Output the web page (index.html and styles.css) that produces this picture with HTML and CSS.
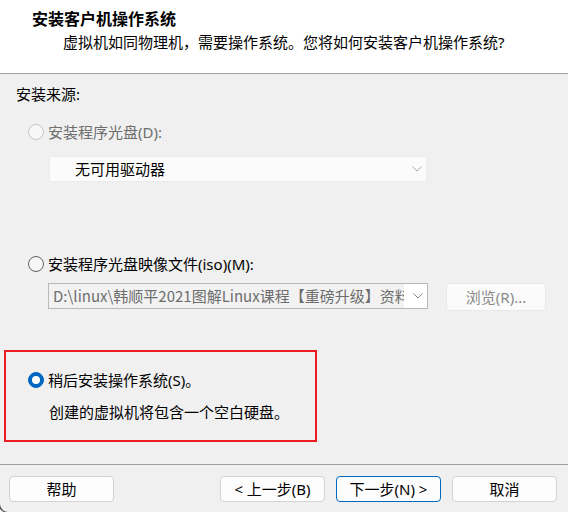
FILE: index.html
```html
<!DOCTYPE html>
<html lang="zh-CN">
<head>
<meta charset="utf-8">
<title>新建虚拟机向导</title>
<link rel="stylesheet" href="styles.css">
</head>
<body>
<div class="window">
  <header class="header">
    <div class="title">安装客户机操作系统</div>
    <div class="subtitle">虚拟机如同物理机，需要操作系统。您将如何安装客户机操作系统?</div>
  </header>
  <main class="content">
    <div class="section-label">安装来源:</div>
    <div class="radio-row disabled"><span class="radio"></span><span class="radio-label">安装程序光盘(D):</span></div>
    <div class="select">
      <span class="select-text">无可用驱动器</span>
      <svg class="chev light" width="10" height="6" viewBox="0 0 10 6"><polyline points="0.5,0.5 5,5 9.5,0.5" fill="none" stroke="currentColor" stroke-width="1"/></svg>
    </div>
    <div class="radio-row iso"><span class="radio"></span><span class="radio-label">安装程序光盘映像文件(iso)(M):</span></div>
    <div class="iso-row">
      <div class="combo">
        <span class="combo-text">D:\linux\韩顺平2021图解Linux课程【重磅升级】资料分享\CentOS-7-x86_64-DVD-1708.iso</span>
        <span class="combo-btn"><svg class="chev" width="10" height="6" viewBox="0 0 10 6"><polyline points="0.5,0.5 5,5 9.5,0.5" fill="none" stroke="currentColor" stroke-width="1"/></svg></span>
      </div>
      <button class="btn browse">浏览(R)...</button>
    </div>
    <div class="highlight">
      <div class="radio-row"><span class="radio checked"></span><span class="radio-label">稍后安装操作系统(S)。</span></div>
      <div class="note">创建的虚拟机将包含一个空白硬盘。</div>
    </div>
  </main>
  <footer class="footer">
    <button class="btn">帮助</button>
    <div class="nav">
      <button class="btn">&lt; 上一步(B)</button>
      <button class="btn default">下一步(N) &gt;</button>
      <button class="btn">取消</button>
    </div>
  </footer>
  <div class="corner"></div>
</div>
</body>
</html>
```
FILE: styles.css
```css
* { box-sizing: border-box; }
html, body { margin: 0; padding: 0; }
body {
  background: #f0f0f0;
  font-family: "Noto Sans", "Noto Sans CJK SC", sans-serif;
  font-size: 15px;
  color: #000;
}
.window {
  position: relative;
  width: 568px;
  height: 512px;
  overflow: hidden;
  background: #f0f0f0;
}
.header {
  height: 74px;
  background: #fff;
  border-bottom: 1px solid #a0a0a0;
  padding-top: 9px;
}
.title {
  padding-left: 32px;
  font-size: 16px;
  font-weight: bold;
  line-height: 20px;
}
.subtitle {
  margin-top: 3px;
  padding-left: 63px;
  line-height: 20px;
}
.content {
  padding-top: 10px;
}
.section-label {
  padding-left: 16px;
  line-height: 20px;
}
.radio-row {
  display: flex;
  align-items: center;
  height: 20px;
  line-height: 20px;
  padding-left: 28px;
  margin-top: 18px;
}
.radio-row.iso { margin-top: 72px; }
.radio {
  width: 16px;
  height: 16px;
  border-radius: 50%;
  border: 1px solid #616161;
  background: #f6f6f6;
  margin-right: 4px;
  flex: none;
  position: relative;
}
.disabled .radio {
  border-color: #c6c6c6;
  background: #f7f7f7;
}
.disabled .radio-label { color: #6d6d6d; }
.radio.checked {
  background: #0067c0;
  border-color: #0067c0;
}
.radio.checked::after {
  content: "";
  position: absolute;
  left: 3px;
  top: 3px;
  width: 8px;
  height: 8px;
  border-radius: 50%;
  background: #fff;
}
.select {
  margin-top: 14px;
  margin-left: 49px;
  width: 378px;
  height: 26px;
  background: #fbfbfb;
  border: 1px solid #ececec;
  border-radius: 2px;
  display: flex;
  align-items: center;
  justify-content: space-between;
  padding: 0 4px 0 25px;
}
.select-text { line-height: 20px; }
.chev { display: block; color: #8a8a8a; }
.chev.light { color: #a8a8a8; }
.iso-row {
  margin-top: 9px;
  display: flex;
  align-items: flex-start;
}
.combo {
  margin-left: 48px;
  width: 380px;
  height: 26px;
  border: 1px solid #b9b9b9;
  background: #fff;
  display: flex;
  align-items: stretch;
}
.combo-text {
  width: 355px;
  flex: none;
  overflow: hidden;
  white-space: nowrap;
  background: #f2f2f2;
  color: #6d6d6d;
  font-family: "Noto Sans CJK SC", sans-serif;
  line-height: 24px;
  padding-left: 4px;
}
.combo-btn {
  flex: 1;
  display: flex;
  align-items: center;
  justify-content: flex-end;
  padding-right: 4px;
}
.btn {
  font-family: inherit;
  font-size: 15px;
  color: #000;
  width: 105px;
  height: 26px;
  padding: 0;
  background: #fdfdfd;
  border: 1px solid #d3d3d3;
  border-radius: 4px;
  line-height: 20px;
  white-space: nowrap;
}
.browse {
  margin-left: 18px;
  width: 100px;
  height: 28px;
  background: #fbfbfb;
  border-color: #e8e8e8;
  color: #8a8a8a;
}
.highlight {
  margin-top: 39px;
  margin-left: 4px;
  width: 313px;
  height: 92px;
  border: 2px solid #ec1c24;
  padding: 18px 0 0 22px;
}
.highlight .radio-row { margin-top: 0; padding-left: 0; }
.note {
  margin-top: 12px;
  padding-left: 21px;
  line-height: 20px;
}
.footer {
  margin-top: 22px;
  border-top: 1px solid #a0a0a0;
  padding: 11px 11px 0 9px;
  display: flex;
  justify-content: space-between;
}
.nav {
  display: flex;
  gap: 11px;
}
.btn.default { border-color: #0067c0; }
.corner {
  position: absolute;
  left: -1px;
  bottom: -1px;
  width: 12px;
  height: 12px;
  border-left: 1px solid #3a3a3a;
  border-bottom: 1px solid #3a3a3a;
  border-bottom-left-radius: 9px;
}
```
